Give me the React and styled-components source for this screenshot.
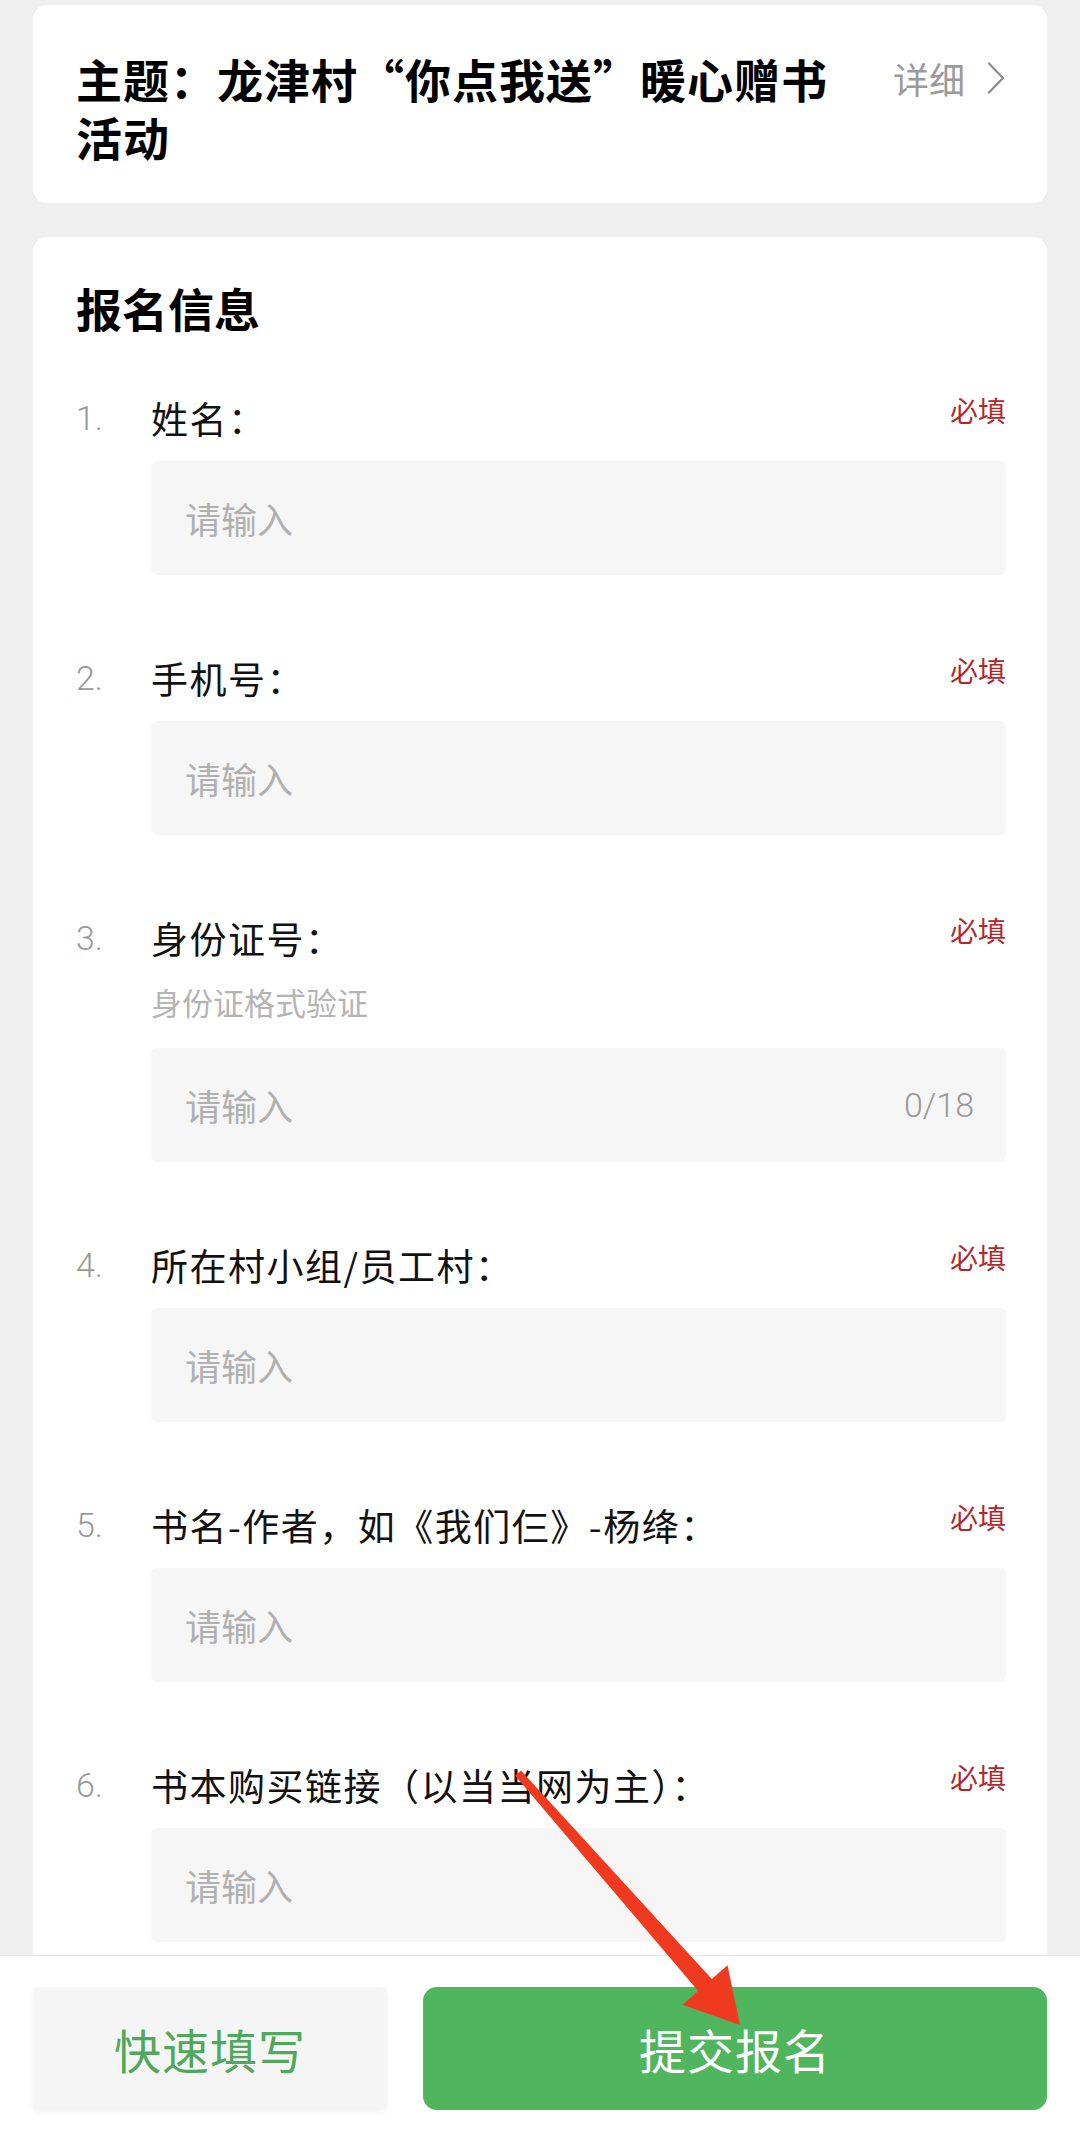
import React from 'react';
import styled, { createGlobalStyle } from 'styled-components';

const GlobalStyle = createGlobalStyle`
    html, body {
        margin: 0;
        padding: 0;
        background: #efefef;
        overflow: hidden;
    }
    body {
        font-family: "Noto Sans CJK SC", "Noto Sans", sans-serif;
        color: #111;
    }
`;

const Page = styled.div`
    position: relative;
    min-height: 2134px;
    padding: 5px 33px 0;
    box-sizing: border-box;
    display: flex;
    flex-direction: column;
    gap: 34px;
`;

const Card = styled.div`
    background: #fff;
    border-radius: 14px;
    padding: ${props => props.padding};
`;

const TopicRow = styled.div`
    display: flex;
    align-items: flex-start;
`;

const TopicTitle = styled.h1`
    flex: 1;
    margin: 0;
    font-size: 46px;
    font-weight: 700;
    line-height: 58px;
    letter-spacing: 1px;
    color: #000;
`;

const DetailLink = styled.div`
    flex: none;
    display: flex;
    align-items: center;
    gap: 22px;
    margin-left: 36px;
    height: 58px;
    font-size: 36px;
    color: #9a9a9a;
`;

const SectionTitle = styled.h2`
    margin: 0 0 56px;
    font-size: 46px;
    font-weight: 700;
    line-height: 60px;
    color: #000;
`;

const FieldList = styled.div`
    display: flex;
    flex-direction: column;
    gap: 78px;
`;

const Field = styled.div`
    display: flex;
    flex-direction: column;
`;

const FieldHead = styled.div`
    display: flex;
    align-items: flex-start;
    height: 50px;
`;

const FieldNo = styled.span`
    width: 75px;
    flex: none;
    font-family: Roboto, "Noto Sans", sans-serif;
    font-weight: 300;
    font-size: 34px;
    line-height: 50px;
    color: #999;
`;

const FieldLabel = styled.span`
    flex: 1;
    font-size: 37px;
    line-height: 50px;
    letter-spacing: 1.5px;
    color: #111;
`;

const Required = styled.span`
    flex: none;
    font-size: 28px;
    line-height: 34px;
    color: #b3262c;
`;

const Hint = styled.div`
    margin: 19px 0 0 75px;
    font-size: 31px;
    line-height: 40px;
    color: #b4b4b4;
`;

const InputBox = styled.div`
    margin: ${props => (props.hasHint ? '26px' : '18px')} 0 0 75px;
    height: 114px;
    border-radius: 6px;
    background: #f6f6f6;
    display: flex;
    align-items: center;
    justify-content: space-between;
    padding: 0 32px 0 34px;
    font-size: 36px;
    color: #b0b0b0;
`;

const Counter = styled.span`
    font-family: Roboto, "Noto Sans", sans-serif;
    font-weight: 300;
    font-size: 34px;
    color: #999;
`;

const BottomBar = styled.div`
    position: fixed;
    left: 0;
    right: 0;
    bottom: 0;
    height: 179px;
    box-sizing: border-box;
    background: #fff;
    border-top: 1px solid #e4e4e4;
    padding: 31px 33px 24px;
    display: flex;
    gap: 36px;
`;

const BarButton = styled.div`
    flex: ${props => (props.primary ? '1' : 'none')};
    width: ${props => (props.primary ? 'auto' : '354px')};
    display: flex;
    align-items: center;
    justify-content: center;
    border-radius: ${props => (props.primary ? '14px' : '6px')};
    background: ${props => (props.primary ? '#50b65e' : '#f5f5f5')};
    box-shadow: ${props => (props.primary ? 'none' : '0 2px 6px rgba(0,0,0,0.06)')};
    color: ${props => (props.primary ? '#fff' : '#4fa85b')};
    font-size: 47px;
    letter-spacing: 1px;
`;

const Annotation = styled.svg`
    position: fixed;
    left: 0;
    top: 0;
    width: 1080px;
    height: 2134px;
    pointer-events: none;
    z-index: 5;
`;

const fields = [
    { label: '姓名：' },
    { label: '手机号：' },
    { label: '身份证号：', hint: '身份证格式验证', counter: '0/18' },
    { label: '所在村小组/员工村：' },
    { label: '书名-作者，如《我们仨》-杨绛：' },
    { label: '书本购买链接（以当当网为主）：' },
];

const Chevron = () => (
    <svg width="18" height="32" viewBox="0 0 18 32" fill="none">
        <path d="M2 1.5 L16 16 L2 30.5" stroke="#8a8a8a" strokeWidth="2.2" strokeLinecap="round" strokeLinejoin="round" />
    </svg>
);

const App = () => {
    return <>
        <GlobalStyle />
        <Page>
            <Card padding="44px 42px 38px 43px">
                <TopicRow>
                    <TopicTitle>主题：龙津村“你点我送”暖心赠书活动</TopicTitle>
                    <DetailLink>详细<Chevron /></DetailLink>
                </TopicRow>
            </Card>
            <Card padding="40px 41px 40px 43px">
                <SectionTitle>报名信息</SectionTitle>
                <FieldList>
                    {fields.map((item, index) => {
                        return <Field key={`field-${index}`}>
                            <FieldHead>
                                <FieldNo>{index + 1}.</FieldNo>
                                <FieldLabel>{item.label}</FieldLabel>
                                <Required>必填</Required>
                            </FieldHead>
                            {item.hint && <Hint>{item.hint}</Hint>}
                            <InputBox hasHint={!!item.hint}>
                                <span>请输入</span>
                                {item.counter && <Counter>{item.counter}</Counter>}
                            </InputBox>
                        </Field>
                    })}
                </FieldList>
            </Card>
        </Page>
        <BottomBar>
            <BarButton>快速填写</BarButton>
            <BarButton primary>提交报名</BarButton>
        </BottomBar>
        <Annotation viewBox="0 0 1080 2134">
            <polygon
                fill="#ef3a20"
                points="521,1770.4 711.8,1979.1 727.5,1965.2 740,2025 682.5,2004.8 698.2,1990.9 515,1775.6"
            />
        </Annotation>
    </>
};

export default App;
